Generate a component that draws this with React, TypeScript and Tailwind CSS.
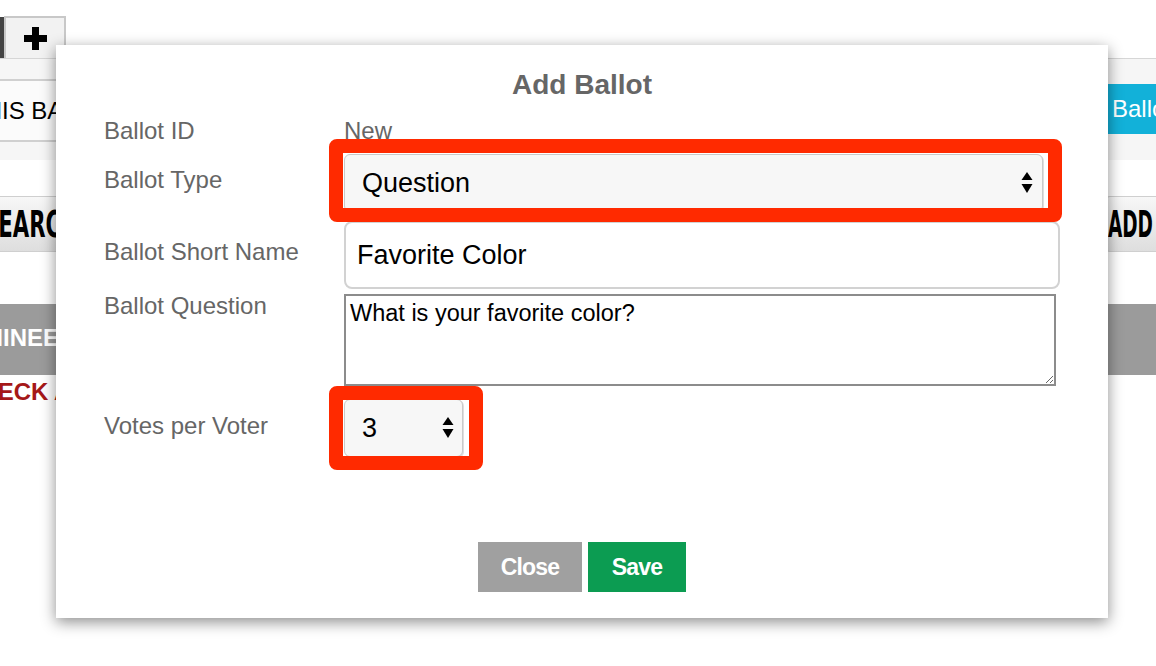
import React from "react";

const sans = "font-['Liberation_Sans',Arial,sans-serif]";

const SelectArrows: React.FC = () => (
  <svg width="12" height="22" viewBox="0 0 12 22" className="pointer-events-none">
    <polygon points="6,0 11.5,8 0.5,8" fill="#000" />
    <polygon points="0.5,12 11.5,12 6,21" fill="#000" />
  </svg>
);

const Highlight: React.FC<{ className: string }> = ({ className }) => (
  <div className={`absolute border-[14px] border-[#ff2a00] rounded-[8px] ${className}`} />
);

const Background: React.FC = () => (
  <div className="w-full">
    {/* tabs */}
    <div className="flex items-end h-[58px]">
      <div className="w-[4px] h-[41px] bg-[#444]" />
      <div className="w-[62px] h-[42px] bg-[#f2f2f2] border-2 border-b-0 border-[#c8c8c8] flex items-center justify-center">
        <svg width="23" height="23" viewBox="0 0 23 23">
          <rect x="8" y="0" width="7" height="23" fill="#000" />
          <rect x="0" y="8" width="23" height="7" fill="#000" />
        </svg>
      </div>
    </div>

    {/* ballot toolbar */}
    <div className="h-[102px] bg-[#f6f6f6] border-t border-[#d6d6d6] flex items-start overflow-hidden">
      <div className="mt-[20px] w-[420px] h-[63px] bg-[#fbfbfb] border-y-2 border-[#d0d0d0] flex items-center overflow-hidden">
        <span className="ml-[-30px] text-[24px] text-black whitespace-nowrap">THIS BALLOT</span>
      </div>
      <div className="ml-auto mt-[25px] shrink-0 w-[48px] h-[50px] bg-[#12b1d9] flex items-center overflow-hidden">
        <span className="pl-[4px] text-[24px] text-white whitespace-nowrap">Ballot</span>
      </div>
    </div>

    {/* search row */}
    <div className="mt-[36px] h-[56px] flex items-stretch">
      <div className="w-[300px] bg-gradient-to-b from-[#f7f7f7] to-[#dedede] border-y border-r border-[#cfcfcf] rounded-r-[4px] flex items-center overflow-hidden">
        <span className="ml-[-17px] origin-left scale-x-[0.62] text-[38px] font-bold leading-none text-black whitespace-nowrap font-['DejaVu_Sans_Condensed',sans-serif]">
          SEARCH
        </span>
      </div>
      <div className="ml-auto w-[50px] bg-gradient-to-b from-[#f7f7f7] to-[#dedede] border-y border-l border-[#cfcfcf] rounded-l-[4px] flex items-center overflow-hidden">
        <span className="ml-[1px] origin-left scale-x-[0.54] text-[38px] font-bold leading-none text-black whitespace-nowrap font-['DejaVu_Sans_Condensed',sans-serif]">
          ADD
        </span>
      </div>
    </div>

    {/* nominee header */}
    <div className="mt-[52px] h-[71px] bg-[#9b9b9b] flex items-center overflow-hidden">
      <span className="ml-[-53px] mt-[-4px] text-[24px] font-bold text-white whitespace-nowrap">NOMINEES</span>
    </div>
    <div className="mt-[3px] h-[28px] flex items-center overflow-hidden">
      <span className="ml-[-37px] text-[24px] font-bold text-[#a51818] whitespace-nowrap">CHECK ALL</span>
    </div>
  </div>
);

const Label: React.FC<{ children: React.ReactNode; pt: string }> = ({ children, pt }) => (
  <div className={`w-[240px] shrink-0 text-[24px] leading-[24px] text-[#666] ${pt}`}>{children}</div>
);

const AddBallotModal: React.FC = () => (
  <div className="absolute left-[56px] top-[45px] w-[1052px] h-[573px] bg-white shadow-[0_4px_14px_rgba(0,0,0,0.45)] flex flex-col">
    <h2 className="pt-[24px] text-center text-[28px] leading-[32px] font-bold text-[#666]">Add Ballot</h2>

    <div className="pl-[48px] flex flex-col">
      <div className="mt-[18px] flex">
        <Label pt="pt-0">Ballot ID</Label>
        <div className="text-[24px] leading-[24px] text-[#666]">New</div>
      </div>

      <div className="mt-[11px] flex">
        <Label pt="pt-[14px]">Ballot Type</Label>
        <div className="relative w-[699px] h-[58px] rounded-[6px] border border-[#c9c9c9] bg-[#f7f7f7] shadow-[1px_1px_0_#dedede] flex items-center">
          <span className="pl-[17px] text-[27px] text-black">Question</span>
          <div className="ml-auto mr-[9px] flex items-center">
            <SelectArrows />
          </div>
        </div>
      </div>

      <div className="mt-[9px] flex">
        <Label pt="pt-[19px]">Ballot Short Name</Label>
        <input
          defaultValue="Favorite Color"
          className="w-[716px] h-[68px] rounded-[8px] border-2 border-[#d2d2d2] bg-white pl-[11px] text-[27px] text-black outline-none"
        />
      </div>

      <div className="mt-[5px] flex">
        <Label pt="pt-0">Ballot Question</Label>
        <textarea
          defaultValue="What is your favorite color?"
          className="w-[712px] h-[92px] border-2 border-[#8c8c8c] bg-white pl-[4px] pt-[4px] text-[23.5px] leading-[27px] text-black outline-none"
        />
      </div>

      <div className="mt-[13px] flex">
        <Label pt="pt-[15px]">Votes per Voter</Label>
        <div className="w-[119px] h-[58px] rounded-[6px] border border-[#c9c9c9] bg-[#f7f7f7] shadow-[1px_1px_0_#dedede] flex items-center">
          <span className="pl-[17px] text-[27px] text-black">3</span>
          <div className="ml-auto mr-[8px] flex items-center">
            <SelectArrows />
          </div>
        </div>
      </div>
    </div>

    <div className="mt-[85px] flex justify-center gap-[6px]">
      <button className="w-[104px] h-[50px] bg-[#a0a0a0] text-white text-[23px] tracking-[-0.8px] font-bold">Close</button>
      <button className="w-[98px] h-[50px] bg-[#0c9c52] text-white text-[23px] tracking-[-0.8px] font-bold">Save</button>
    </div>

    <Highlight className="left-[273px] top-[94px] w-[733px] h-[83px]" />
    <Highlight className="left-[273px] top-[341px] w-[154px] h-[84px]" />
  </div>
);

export default function App() {
  return (
    <div className={`relative w-[1156px] h-[666px] overflow-hidden bg-white ${sans}`}>
      <Background />
      <AddBallotModal />
    </div>
  );
}
